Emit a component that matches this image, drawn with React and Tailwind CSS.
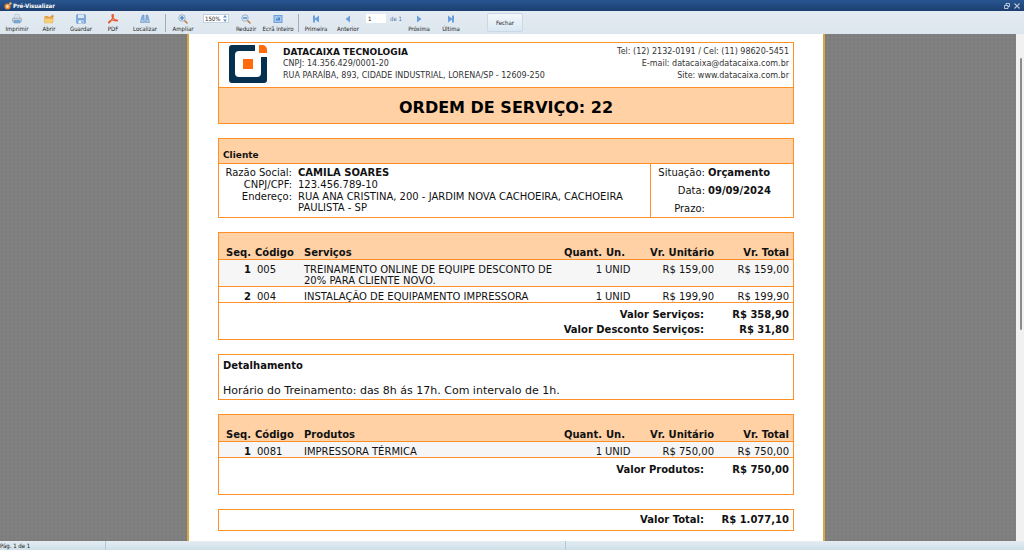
import React, { useState } from 'react';

const icons = {
  print: (
    <svg viewBox="0 0 20 20" className="w-2.5 h-2.5">
      <path d="M6 1h8l2 8H4z" fill="#f4f7fb" stroke="#8fa3bb" />
      <path d="M7 4h6M7 6h6" stroke="#a9c3e0" />
      <rect x="1" y="8" width="18" height="8" rx="2" fill="#c6d1de" stroke="#7f92a8" />
      <path d="M4 13h12v5H4z" fill="#6fb0e6" stroke="#7488a0" />
    </svg>
  ),
  open: (
    <svg viewBox="0 0 20 20" className="w-2.5 h-2.5">
      <path d="M1 4h7l2 2h8v12H1z" fill="#e0a548" />
      <path d="M2 9h17l-2 9H1z" fill="#f8cf74" stroke="#e6ac58" />
      <path d="M11 6q2-4 6-3V0l3 5-5 3V5q-2 0-4 1z" fill="#ee8a2e" />
    </svg>
  ),
  save: (
    <svg viewBox="0 0 20 20" className="w-2.5 h-2.5">
      <rect x="1" y="1" width="18" height="18" rx="2" fill="#7ba8dd" stroke="#5d8cc8" />
      <rect x="4" y="1" width="12" height="7" fill="#dce8f5" />
      <rect x="5" y="13" width="10" height="6" fill="#eef3f9" />
      <rect x="11" y="14" width="2" height="4" fill="#4d7cb8" />
    </svg>
  ),
  pdf: (
    <svg viewBox="0 0 20 20" className="w-2.5 h-2.5">
      <path
        d="M9 1q3 0 1 6 3 6 8 5 2 1 0 2-5 0-9-2-3 0-5 4-3 3-3 1 1-3 6-5 2-3 2-5-2-5 0-6z"
        fill="none"
        stroke="#e8582c"
        strokeWidth="2.4"
      />
    </svg>
  ),
  find: (
    <svg viewBox="0 0 20 20" className="w-2.5 h-2.5">
      <path d="M5 2h3v5l1 10H1l2-10zM12 2h3l2 5 2 10h-8l1-10z" fill="#86b0da" stroke="#628fbe" />
      <rect x="8" y="6" width="4" height="5" fill="#a9c8e6" />
      <path d="M3 14h4M13 14h4" stroke="#dcebf8" strokeWidth="2" />
    </svg>
  ),
  zoomIn: (
    <svg viewBox="0 0 20 20" className="w-2.5 h-2.5">
      <path d="M12 12l6 6" stroke="#c07a3c" strokeWidth="3" strokeLinecap="round" />
      <circle cx="8" cy="8" r="6.5" fill="#d5e8f9" stroke="#8ba0b8" strokeWidth="1.5" />
      <path d="M8 4v8M4 8h8" stroke="#3d76b8" strokeWidth="2.4" />
    </svg>
  ),
  zoomOut: (
    <svg viewBox="0 0 20 20" className="w-2.5 h-2.5">
      <path d="M12 12l6 6" stroke="#c07a3c" strokeWidth="3" strokeLinecap="round" />
      <circle cx="8" cy="8" r="6.5" fill="#d5e8f9" stroke="#8ba0b8" strokeWidth="1.5" />
      <path d="M4 8h8" stroke="#3d76b8" strokeWidth="2.4" />
    </svg>
  ),
  full: (
    <svg viewBox="0 0 20 20" className="w-2.5 h-2.5">
      <rect x="2" y="3" width="16" height="14" fill="#a5caf2" stroke="#6f9fda" strokeWidth="2" />
      <rect x="6" y="7" width="8" height="6" fill="#4f86cc" />
      <path d="M6 7l4 3" stroke="#e8f2fc" strokeWidth="1.5" />
    </svg>
  ),
  first: (
    <svg viewBox="0 0 20 20" className="w-2.5 h-2.5">
      <path d="M4 3h4v6l8-6v14l-8-6v6H4z" fill="#6a9fdd" />
    </svg>
  ),
  prev: (
    <svg viewBox="0 0 20 20" className="w-2.5 h-2.5">
      <path d="M5 10l9-7v14z" fill="#6a9fdd" />
    </svg>
  ),
  next: (
    <svg viewBox="0 0 20 20" className="w-2.5 h-2.5">
      <path d="M15 10L6 3v14z" fill="#6a9fdd" />
    </svg>
  ),
  last: (
    <svg viewBox="0 0 20 20" className="w-2.5 h-2.5">
      <path d="M16 3h-4v6L4 3v14l8-6v6h4z" fill="#6a9fdd" />
    </svg>
  ),
};

const services = [
  { seq: 1, code: '005', name: 'TREINAMENTO ONLINE DE EQUIPE DESCONTO DE 20% PARA CLIENTE NOVO.', qty: 1, un: 'UNID', price: 'R$ 159,00', total: 'R$ 159,00' },
  { seq: 2, code: '004', name: 'INSTALAÇÃO DE EQUIPAMENTO IMPRESSORA', qty: 1, un: 'UNID', price: 'R$ 199,90', total: 'R$ 199,90' },
];

const products = [
  { seq: 1, code: '0081', name: 'IMPRESSORA TÉRMICA', qty: 1, un: 'UNID', price: 'R$ 750,00', total: 'R$ 750,00' },
];

const ToolButton = ({ icon, label, onClick }) => (
  <button
    type="button"
    onClick={onClick}
    className="flex w-8 flex-col items-center whitespace-nowrap pt-0.5 text-[6px] leading-[10px]"
  >
    {icons[icon]}
    {label}
  </button>
);

const Separator = () => <span className="ml-1 mr-px mt-0.5 h-[18px] w-px bg-[#a3adb8]" />;

const Logo = () => (
  <svg viewBox="0 0 38 38" className="h-[38px] w-[38px] shrink-0">
    <path
      d="M3 0h23v6H10q-4 0-4 4v18q0 4 4 4h18q4 0 4-4V12h6v23q0 3-3 3H3q-3 0-3-3V3q0-3 3-3z"
      fill="#05304f"
    />
    <path d="M30 0h4q4 1 4 5v3h-8z" fill="#ff6a0d" />
    <rect x="14" y="14" width="10" height="10" fill="#ff6a0d" />
  </svg>
);

const ItemsTable = ({ title, items, totals }) => (
  <table className="w-full table-fixed border-separate border-spacing-0 border border-[#ff8f26] text-[10px] leading-[11px]">
    <colgroup>
      <col className="w-8" />
      <col className="w-[50px]" />
      <col />
      <col className="w-12" />
      <col className="w-12" />
      <col className="w-16" />
      <col className="w-[79px]" />
    </colgroup>
    <thead className="bg-[#ffd1a5]">
      <tr>
        <th className="pb-px pt-3.5 text-right">Seq.</th>
        <th className="pb-px pl-1 pt-3.5 text-left">Código</th>
        <th className="pb-px pl-[3px] pt-3.5 text-left">{title}</th>
        <th className="pb-px pt-3.5 text-right">Quant.</th>
        <th className="pb-px pl-1 pt-3.5 text-left">Un.</th>
        <th className="pb-px pt-3.5 text-right">Vr. Unitário</th>
        <th className="pb-px pr-1 pt-3.5 text-right">Vr. Total</th>
      </tr>
    </thead>
    <tbody>
      {items.map((item) => (
        <tr key={item.seq} className="align-top odd:bg-[#f6f6f6] [&>td]:border-t [&>td]:border-[#ff8f26] [&>td]:pt-1">
          <td className="text-right font-bold">{item.seq}</td>
          <td className="pl-1.5">{item.code}</td>
          <td className="pl-[3px]">{item.name}</td>
          <td className="text-right">{item.qty}</td>
          <td className="pl-[3px]">{item.un}</td>
          <td className="text-right">{item.price}</td>
          <td className="pr-1 text-right">{item.total}</td>
        </tr>
      ))}
      <tr>
        <td colSpan={7} className="h-[37px] border-t border-[#ff8f26] p-0 pt-1 align-top font-bold leading-[15px]">
          {totals.map((row) => (
            <TotalLine key={row.label} label={row.label} value={row.value} />
          ))}
        </td>
      </tr>
    </tbody>
  </table>
);

const TotalLine = ({ label, value }) => (
  <div className="flex justify-end pr-1">
    <span>{label}</span>
    <span className="w-[85px] text-right">{value}</span>
  </div>
);

const App = () => {
  const [page, setPage] = useState('1');
  const [zoom, setZoom] = useState('150%');

  return (
    <div className="flex h-screen flex-col overflow-hidden bg-[#e1e9f0] font-['DejaVu_Sans','Verdana',sans-serif] text-[#111]">
      {/* Title bar */}
      <header className="flex h-[11px] shrink-0 items-center bg-gradient-to-b from-[#285590] to-[#1c3f70] px-1 text-white">
        <svg viewBox="0 0 16 16" className="h-2 w-2">
          <circle cx="7" cy="9" r="6" fill="#f28a2b" />
          <circle cx="7" cy="9" r="2.4" fill="#fff3df" />
          <circle cx="13" cy="3" r="2.5" fill="#e8b27a" />
        </svg>
        <h1 className="ml-px font-['DejaVu_Sans_Condensed','DejaVu_Sans',sans-serif] text-[6px] font-bold leading-[8px]">Pré-Visualizar</h1>
        <div className="ml-auto flex gap-1">
          <button type="button" aria-label="Restaurar">
            <svg viewBox="0 0 12 12" className="h-1.5 w-1.5" fill="none" stroke="#d5e0ee" strokeWidth="1.6">
              <path d="M4 4V1h7v6H8M1 5h7v6H1z" />
            </svg>
          </button>
          <button type="button" aria-label="Fechar janela">
            <svg viewBox="0 0 12 12" className="h-1.5 w-1.5" stroke="#b5c6dc" strokeWidth="2.4">
              <path d="M1 1l10 10M11 1L1 11" />
            </svg>
          </button>
        </div>
      </header>

      {/* Toolbar */}
      <nav className="flex h-[23px] shrink-0 items-start bg-gradient-to-b from-[#e4ebf2] to-[#dde6ee] pl-px pt-px font-['DejaVu_Sans_Condensed','DejaVu_Sans',sans-serif] text-[#222]">
        <ToolButton icon="print" label="Imprimir" />
        <ToolButton icon="open" label="Abrir" />
        <ToolButton icon="save" label="Guardar" />
        <ToolButton icon="pdf" label="PDF" />
        <ToolButton icon="find" label="Localizar" />
        <Separator />
        <ToolButton icon="zoomIn" label="Ampliar" />
        <div className="relative ml-1 mr-px mt-0.5 h-[9px] w-[26px] bg-white">
          <select
            aria-label="Zoom"
            value={zoom}
            onChange={(e) => setZoom(e.target.value)}
            className="block h-full w-full appearance-none border border-[#c3d0de] pl-px text-[6px] leading-[7px]"
          >
            <option>100%</option>
            <option>150%</option>
            <option>200%</option>
          </select>
          <svg viewBox="0 0 8 14" className="pointer-events-none absolute right-0.5 top-px h-[7px] w-1" fill="#5c8fc6">
            <path d="M4 0l4 5H0zM4 14l4-5H0z" />
          </svg>
        </div>
        <ToolButton icon="zoomOut" label="Reduzir" />
        <ToolButton icon="full" label="Ecrã inteiro" />
        <Separator />
        <ToolButton icon="first" label="Primeira" onClick={() => setPage('1')} />
        <ToolButton icon="prev" label="Anterior" />
        <input
          type="text"
          aria-label="Página"
          value={page}
          onChange={(e) => setPage(e.target.value)}
          className="ml-0.5 mt-0.5 h-[9px] w-5 bg-white pl-0.5 text-[6px] leading-[9px]"
        />
        <span className="mt-0.5 w-[17px] pl-1 text-[6px] leading-[9px] text-[#4d78ad] whitespace-nowrap">de 1</span>
        <ToolButton icon="next" label="Próxima" />
        <ToolButton icon="last" label="Última" />
        <button
          type="button"
          className="ml-5 mt-px h-[19px] w-9 rounded-xs border border-[#c9d9e6] bg-gradient-to-b from-[#f4f8fb] to-[#d9e8f2] text-[6px] leading-[9px]"
        >
          Fechar
        </button>
      </nav>

      <div className="flex min-h-0 flex-1">
        <main className="flex-1 overflow-hidden bg-[#808080] bg-[radial-gradient(#7b7b7b_1px,transparent_1px)] bg-[length:4px_4px] pr-1">
          <article className="mx-auto flex min-h-full w-full max-w-[638px] flex-col gap-3.5 border-x-2 border-[#d9a640] bg-white px-[29px] pt-2">
            <section className="border border-[#ff8f26]">
              <div className="flex h-11 items-start pl-2.5 pr-1 pt-0.5">
                <Logo />
                <div className="ml-4 flex-1 pt-px text-[8px] leading-[12px] text-[#333]">
                  <h2 className="text-[9px] font-bold text-[#111]">DATACAIXA TECNOLOGIA</h2>
                  <p>CNPJ: 14.356.429/0001-20</p>
                  <p>RUA PARAÍBA, 893, CIDADE INDUSTRIAL, LORENA/SP - 12609-250</p>
                </div>
                <div className="pt-px text-right text-[8px] leading-[12px] text-[#333]">
                  <p>Tel: (12) 2132-0191 / Cel: (11) 98620-5451</p>
                  <p>E-mail: datacaixa@datacaixa.com.br</p>
                  <p>Site: www.datacaixa.com.br</p>
                </div>
              </div>
              <div className="flex h-9 items-center justify-center border-t border-[#ff8f26] bg-[#ffd1a5] pt-1">
                <h2 className="text-base font-bold text-black">ORDEM DE SERVIÇO: 22</h2>
              </div>
            </section>

            <section className="border border-[#ff8f26]">
              <h3 className="h-6 bg-[#ffd1a5] pl-1 pt-2.5 text-[9px] font-bold leading-[12px]">Cliente</h3>
              <div className="flex h-[54px] border-t border-[#ff8f26] text-[10px]">
                <dl className="grid flex-1 grid-cols-[73px_1fr] content-start gap-x-1.5 pt-[3px] leading-[12px]">
                  <dt className="text-right">Razão Social:</dt>
                  <dd className="font-bold">CAMILA SOARES</dd>
                  <dt className="text-right">CNPJ/CPF:</dt>
                  <dd>123.456.789-10</dd>
                  <dt className="text-right">Endereço:</dt>
                  <dd className="leading-[11px]">RUA ANA CRISTINA, 200 - JARDIM NOVA CACHOEIRA, CACHOEIRA PAULISTA - SP</dd>
                </dl>
                <dl className="grid w-[143px] grid-cols-[54px_1fr] content-start gap-x-[3px] border-l border-[#ff8f26] leading-[18px]">
                  <dt className="text-right">Situação:</dt>
                  <dd className="font-bold">Orçamento</dd>
                  <dt className="text-right">Data:</dt>
                  <dd className="font-bold">09/09/2024</dd>
                  <dt className="text-right">Prazo:</dt>
                  <dd />
                </dl>
              </div>
            </section>

            <ItemsTable
              title="Serviços"
              items={services}
              totals={[
                { label: 'Valor Serviços:', value: 'R$ 358,90' },
                { label: 'Valor Desconto Serviços:', value: 'R$ 31,80' },
              ]}
            />

            <section className="h-[46px] border border-[#ff8f26] pl-1 pt-1 text-[11px] leading-[13px]">
              <h3 className="text-[10px] font-bold">Detalhamento</h3>
              <p className="mt-3">Horário do Treinamento: das 8h ás 17h. Com intervalo de 1h.</p>
            </section>

            <ItemsTable
              title="Produtos"
              items={products}
              totals={[{ label: 'Valor Produtos:', value: 'R$ 750,00' }]}
            />

            <section className="border border-[#ff8f26] py-px text-[10px] font-bold leading-[18px]">
              <TotalLine label="Valor Total:" value="R$ 1.077,10" />
            </section>
          </article>
        </main>

        {/* Scrollbar */}
        <div className="w-2 bg-[#f1f1f1] pt-6">
          <div className="ml-1 h-[272px] w-0.5 rounded-full bg-[#8c8c8c]" />
        </div>
      </div>

      {/* Status bar */}
      <footer className="flex h-[9px] shrink-0 bg-gradient-to-b from-[#e3edf2] to-[#cfdfe8] font-['DejaVu_Sans_Condensed','DejaVu_Sans',sans-serif] text-[6px] leading-[10px]">
        <span className="w-[106px] border-r border-[#b3c8d8]">Pág. 1 de 1</span>
        <span className="w-[460px] border-r border-[#b3c8d8]" />
      </footer>
    </div>
  );
};

export default App;
